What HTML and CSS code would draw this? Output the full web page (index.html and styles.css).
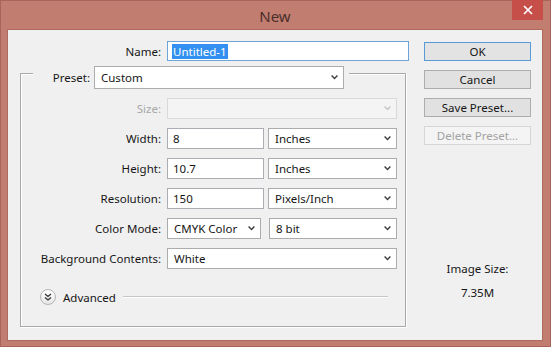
FILE: index.html
```html
<!DOCTYPE html>
<html lang="en">
<head>
  <meta charset="UTF-8" />
  <title>New</title>
  <link rel="stylesheet" href="styles.css">
</head>
<body>
  <div class="window">
    <div class="titlebar">
      <span></span>
      <span class="title">New</span>
      <span class="close">
        <svg width="10" height="10" viewBox="0 0 10 10"><path d="M1 1 L9 9 M9 1 L1 9" stroke="#fff" stroke-width="1.7" fill="none"/></svg>
      </span>
    </div>

    <div class="client">
      <div class="main">
        <div class="name-row">
          <span class="name-lbl">Name:</span>
          <div class="field focus"><span class="selected">Untitled-1</span></div>
        </div>

        <div class="group">
          <div class="preset-row">
            <span class="preset-lbl">Preset:</span>
            <div class="dropdown preset">
              <span>Custom</span>
              <svg class="arrow" width="7" height="5" viewBox="0 0 7 5"><path d="M0.6 0.6 L3.5 3.6 L6.4 0.6" fill="none" stroke="#3c3c3c" stroke-width="1.4"/></svg>
            </div>
          </div>

          <div class="rows">
            <div class="row off">
              <span class="lbl">Size:</span>
              <div class="dropdown wide disabled">
                <span></span>
                <svg class="arrow" width="7" height="5" viewBox="0 0 7 5"><path d="M0.6 0.6 L3.5 3.6 L6.4 0.6" fill="none" stroke="#c4c4c4" stroke-width="1.4"/></svg>
              </div>
            </div>
            <div class="row">
              <span class="lbl">Width:</span>
              <div class="field num">8</div>
              <div class="dropdown unit">
                <span>Inches</span>
                <svg class="arrow" width="7" height="5" viewBox="0 0 7 5"><path d="M0.6 0.6 L3.5 3.6 L6.4 0.6" fill="none" stroke="#3c3c3c" stroke-width="1.4"/></svg>
              </div>
            </div>
            <div class="row">
              <span class="lbl">Height:</span>
              <div class="field num">10.7</div>
              <div class="dropdown unit">
                <span>Inches</span>
                <svg class="arrow" width="7" height="5" viewBox="0 0 7 5"><path d="M0.6 0.6 L3.5 3.6 L6.4 0.6" fill="none" stroke="#3c3c3c" stroke-width="1.4"/></svg>
              </div>
            </div>
            <div class="row">
              <span class="lbl">Resolution:</span>
              <div class="field num">150</div>
              <div class="dropdown unit">
                <span>Pixels/Inch</span>
                <svg class="arrow" width="7" height="5" viewBox="0 0 7 5"><path d="M0.6 0.6 L3.5 3.6 L6.4 0.6" fill="none" stroke="#3c3c3c" stroke-width="1.4"/></svg>
              </div>
            </div>
            <div class="row">
              <span class="lbl">Color Mode:</span>
              <div class="dropdown mode">
                <span>CMYK Color</span>
                <svg class="arrow" width="7" height="5" viewBox="0 0 7 5"><path d="M0.6 0.6 L3.5 3.6 L6.4 0.6" fill="none" stroke="#3c3c3c" stroke-width="1.4"/></svg>
              </div>
              <div class="dropdown bits">
                <span>8 bit</span>
                <svg class="arrow" width="7" height="5" viewBox="0 0 7 5"><path d="M0.6 0.6 L3.5 3.6 L6.4 0.6" fill="none" stroke="#3c3c3c" stroke-width="1.4"/></svg>
              </div>
            </div>
            <div class="row">
              <span class="lbl">Background Contents:</span>
              <div class="dropdown wide">
                <span>White</span>
                <svg class="arrow" width="7" height="5" viewBox="0 0 7 5"><path d="M0.6 0.6 L3.5 3.6 L6.4 0.6" fill="none" stroke="#3c3c3c" stroke-width="1.4"/></svg>
              </div>
            </div>
          </div>

          <div class="advanced">
            <span class="toggle">
              <svg width="8" height="8" viewBox="0 0 8 8"><path d="M1 1 L4 3.5 L7 1 M1 4.5 L4 7 L7 4.5" fill="none" stroke="#333" stroke-width="1.3"/></svg>
            </span>
            <span>Advanced</span>
            <span class="rule"></span>
          </div>
        </div>
      </div>

      <div class="side">
        <div class="btn default">OK</div>
        <div class="btn">Cancel</div>
        <div class="btn">Save Preset...</div>
        <div class="btn disabled">Delete Preset...</div>
        <div class="image-size">
          <div>Image Size:</div>
          <div>7.35M</div>
        </div>
      </div>
    </div>
  </div>
</body>
</html>
```

FILE: styles.css
```css
body {
  margin: 0;
  font-family: "Noto Sans", "Open Sans", sans-serif;
  font-size: 11.5px;
  color: #161616;
  background: #fff;
  overflow: hidden;
}
.window {
  width: 551px;
  height: 347px;
  box-sizing: border-box;
  background: #c27d71;
  border: 1px solid #a9645a;
  padding: 0 8px 6px 7px;
  display: flex;
  flex-direction: column;
}
.titlebar {
  height: 29px;
  display: grid;
  grid-template-columns: 1fr auto 1fr;
  align-items: start;
}
.title {
  font-size: 15px;
  color: #4a2e29;
  line-height: 30px;
}
.close {
  justify-self: end;
  width: 31px;
  height: 20px;
  margin-top: -1px;
  margin-right: -1px;
  background: #c74f4a;
  display: flex;
  align-items: center;
  justify-content: center;
}
.client {
  height: 310px;
  background: #f0f0f0;
  box-shadow: 0 0 0 1px #b06a5e;
  display: flex;
  padding-top: 11px;
  box-sizing: border-box;
}
.main {
  width: 416px;
  padding-left: 12px;
  box-sizing: border-box;
}
.name-row {
  display: flex;
  align-items: center;
  height: 20px;
}
.name-lbl {
  width: 141px;
  text-align: right;
  margin-right: 6px;
}
.field {
  box-sizing: border-box;
  height: 21px;
  background: #fff;
  border: 1px solid #abadb3;
  padding-left: 5px;
  display: flex;
  align-items: center;
}
.field.focus {
  width: 242px;
  height: 20px;
  border-color: #6fa4d8;
  padding-left: 4px;
}
.selected {
  background: #3390f0;
  color: #fff;
  padding: 0 1px;
  line-height: 15px;
}
.group {
  margin-top: 12px;
  width: 386px;
  height: 254px;
  box-sizing: border-box;
  border: 1px solid #a9a9a9;
  box-shadow: inset 1px 1px 0 #fff, 1px 1px 0 #fff;
}
.preset-row {
  display: flex;
  align-items: center;
  width: fit-content;
  height: 23px;
  margin: -8px 0 0 12px;
  padding-right: 5px;
  background: #f0f0f0;
}
.preset-lbl {
  width: 57px;
  text-align: right;
}
.dropdown {
  box-sizing: border-box;
  height: 21px;
  background: #fff;
  border: 1px solid #acacac;
  padding: 0 5px 0 6px;
  display: flex;
  align-items: center;
  justify-content: space-between;
}
.dropdown.preset {
  width: 250px;
  height: 23px;
  margin-left: 4px;
}
.dropdown.disabled {
  background: #f4f4f4;
  border-color: #d9d9d9;
}
.rows {
  margin-top: 9px;
  display: flex;
  flex-direction: column;
  gap: 9px;
}
.row {
  display: flex;
  align-items: center;
  height: 21px;
}
.lbl {
  width: 140px;
  text-align: right;
  margin-right: 6px;
}
.row.off .lbl {
  color: #a8a8a8;
}
.wide {
  width: 230px;
}
.field.num {
  width: 97px;
  margin-right: 4px;
}
.dropdown.unit {
  width: 129px;
}
.dropdown.mode {
  width: 94px;
  margin-right: 8px;
}
.dropdown.bits {
  width: 128px;
}
.advanced {
  margin: 20px 17px 0 19px;
  height: 16px;
  display: flex;
  align-items: center;
  gap: 7px;
}
.toggle {
  width: 14px;
  height: 14px;
  border-radius: 50%;
  border: 1px solid #b4b4b4;
  background: linear-gradient(#ffffff, #e6e6e6);
  display: flex;
  align-items: center;
  justify-content: center;
}
.rule {
  flex: 1;
  height: 1px;
  background: #c6c6c6;
  border-bottom: 1px solid #fff;
}
.side {
  width: 107px;
  padding-top: 1px;
  display: flex;
  flex-direction: column;
  gap: 9px;
}
.btn {
  box-sizing: border-box;
  height: 19px;
  border: 1px solid #adadad;
  background: #e1e1e1;
  text-align: center;
  line-height: 17px;
}
.btn.default {
  border-color: #5a9ad6;
  background: #e3e3e3;
}
.btn.disabled {
  background: #f4f4f4;
  border-color: #d6d6d6;
  color: #a3a3a3;
}
.image-size {
  margin-top: 103px;
  line-height: 24px;
  text-align: center;
}
```
